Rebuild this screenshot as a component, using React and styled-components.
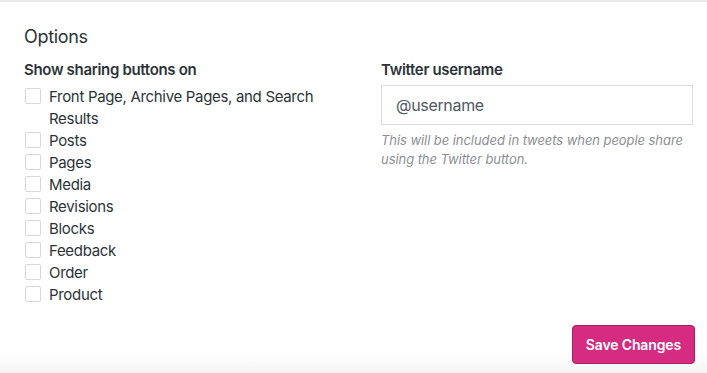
import styled, { createGlobalStyle } from "styled-components";

const GlobalStyle = createGlobalStyle`
  body {
    margin: 0;
    font-family: Inter, "Noto Sans", "Liberation Sans", sans-serif;
    letter-spacing: -0.02em;
    color: #2c3338;
  }
`;

const Page = styled.div`
  height: 373px;
  box-sizing: border-box;
  border-top: 2px solid #e8e8e8;
  background: linear-gradient(to bottom, #fff 352px, #f3f3f3 373px);
  padding: 24px 14px 0 24px;
  display: flex;
  flex-direction: column;
`;

const Heading = styled.h2`
  margin: 0 0 12px;
  font-size: 18px;
  font-weight: 400;
  line-height: 22px;
  color: #2c3338;
`;

const Columns = styled.div`
  display: grid;
  grid-template-columns: 1fr 312px;
  column-gap: 24px;
`;

const Column = styled.div`
  display: flex;
  flex-direction: column;
  padding-left: ${(p) => p.$inset || 0}px;
`;

const FieldLabel = styled.div`
  font-size: 15px;
  font-weight: 600;
  line-height: 20px;
  margin-left: ${(p) => p.$shift || 0}px;
  margin-bottom: ${(p) => p.$gap || 4}px;
`;

const List = styled.ul`
  list-style: none;
  margin: 0;
  padding: 0;
`;

const Item = styled.li`
  display: flex;
  align-items: flex-start;
  gap: 8px;
  font-size: 15px;
  line-height: 22px;
`;

const Box = styled.span`
  flex: none;
  width: 16px;
  height: 16px;
  margin-top: 2px;
  box-sizing: border-box;
  border: 1px solid #d6d6d6;
  border-radius: 2px;
  background: #fff;
`;

const Input = styled.input`
  box-sizing: border-box;
  width: 100%;
  height: 40px;
  padding: 0 14px;
  border: 1px solid #dcdcde;
  font: inherit;
  font-size: 16px;
  letter-spacing: -0.02em;
  color: #50575e;
  outline: none;
  &::placeholder {
    color: #50575e;
  }
`;

const Help = styled.p`
  margin: 6px 0 0;
  font-size: 13px;
  font-style: italic;
  line-height: 19px;
  letter-spacing: -0.005em;
  color: #8c8f94;
`;

const Footer = styled.div`
  margin-top: auto;
  margin-right: -2px;
  padding-bottom: 9px;
  display: flex;
  justify-content: flex-end;
`;

const Button = styled.button`
  height: 39px;
  padding: 0 13px;
  border: 1px solid #a11e61;
  border-radius: 4px;
  background: #d52c82;
  color: #fff;
  font: inherit;
  font-size: 14px;
  font-weight: 600;
  letter-spacing: -0.01em;
  cursor: pointer;
`;

const pageTypes = [
  "Front Page, Archive Pages, and Search Results",
  "Posts",
  "Pages",
  "Media",
  "Revisions",
  "Blocks",
  "Feedback",
  "Order",
  "Product",
];

export default function App() {
  return (
    <>
      <GlobalStyle />
      <Page>
        <Heading>Options</Heading>
        <Columns>
          <Column $inset={1}>
            <FieldLabel $gap={6} $shift={-1}>
              Show sharing buttons on
            </FieldLabel>
            <List>
              {pageTypes.map((t) => (
                <Item key={t}>
                  <Box />
                  <span>{t}</span>
                </Item>
              ))}
            </List>
          </Column>
          <Column>
            <FieldLabel $gap={5}>Twitter username</FieldLabel>
            <Input placeholder="@username" />
            <Help>
              This will be included in tweets when people share using the
              Twitter button.
            </Help>
          </Column>
        </Columns>
        <Footer>
          <Button>Save Changes</Button>
        </Footer>
      </Page>
    </>
  );
}
